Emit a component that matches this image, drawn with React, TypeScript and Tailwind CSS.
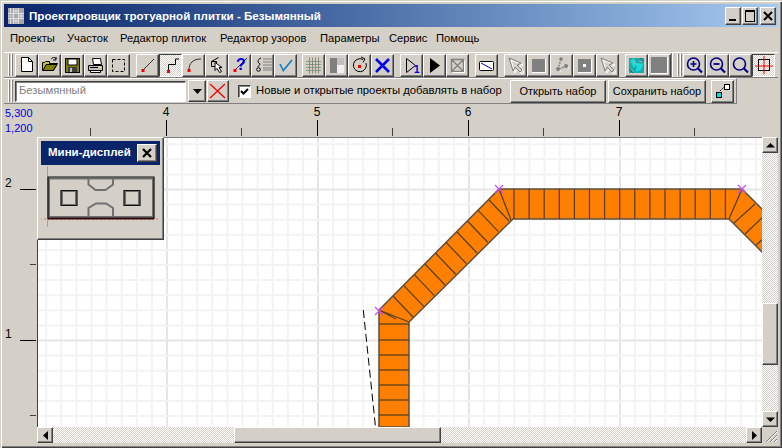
import type { ReactNode } from "react";

const raised =
  "border border-t-white border-l-white border-r-[#404040] border-b-[#404040] shadow-[inset_-1px_-1px_0_#808080] bg-[#d4d0c8]";
const checker =
  "bg-[image:repeating-conic-gradient(#d4d0c8_0_25%,#ffffff_0_50%)] bg-[length:2px_2px]";

function Ico({ children }: { children: ReactNode }) {
  return (
    <svg width="21" height="21" viewBox="0 0 21 21" fill="none" className="block">
      {children}
    </svg>
  );
}

function Btn({ pressed, children }: { pressed?: boolean; children: ReactNode }) {
  return (
    <div
      className={
        pressed
          ? `w-[23px] h-[23px] shrink-0 border border-t-[#404040] border-l-[#404040] border-r-white border-b-white ${checker}`
          : `w-[23px] h-[23px] shrink-0 ${raised}`
      }
    >
      <Ico>{children}</Ico>
    </div>
  );
}

function Grip() {
  return (
    <div className="flex gap-[1px] h-[22px] shrink-0">
      <div className="w-[2px] border-l border-l-white bg-[#808080]" />
      <div className="w-[2px] border-l border-l-white bg-[#808080]" />
    </div>
  );
}

const Dot = ({ x = 5.5, y = 15 }: { x?: number; y?: number }) => (
  <rect x={x - 1} y={y - 1} width="3" height="3" fill="#f00000" />
);

const group1 = [
  <g key="new">
    <path d="M5.5 2.5h7l4 4v10h-11z" fill="#fff" stroke="#000" />
    <path d="M12.5 2.5v4h4" stroke="#000" />
  </g>,
  <g key="open">
    <path d="M3.5 15.500v-8h2l1-1h4v2h8l-4 7z" fill="#c8c050" stroke="#000" />
    <path d="M4 15.500l3-6h11l-4 6z" fill="#808000" stroke="#000" />
    <path d="M12 4c2-2 4-2 5 0M17 2v3h-3" stroke="#000" />
  </g>,
  <g key="save">
    <rect x="3.5" y="3.5" width="14" height="14" fill="#808000" stroke="#000" />
    <rect x="6" y="4" width="9" height="6" fill="#fff" stroke="#000" />
    <rect x="6" y="12" width="9" height="5" fill="#404040" />
    <rect x="8" y="13" width="2" height="4" fill="#c0c0c0" />
  </g>,
  <g key="print">
    <path d="M7.5 3.5h8l1 6h-8z" fill="#fff" stroke="#000" />
    <path d="M3.5 10.500h14v5h-14z" fill="#c0c0c0" stroke="#000" />
    <path d="M5.5 15.500h10v2h-10zM5 12.500h8" stroke="#000" fill="#fff" />
    <rect x="14" y="12" width="2" height="1" fill="#ffff00" />
  </g>,
  <rect key="sel" x="4.5" y="4.5" width="12" height="12" stroke="#000" strokeDasharray="3 2" />,
];

const group2: { pressed?: boolean; el: ReactNode }[] = [
  { el: <g><path d="M6 15L17 4" stroke="#303030" /><Dot /></g> },
  { pressed: true, el: <g><path d="M8.500 16v-6.500h7v-5.500H19" stroke="#000" strokeWidth="1" /><Dot x={8} y={16} /></g> },
  { el: <g><path d="M6 15C6 8 10 4 18 4" stroke="#303030" /><Dot /></g> },
  {
    el: (
      <g>
        <path d="M5.500 6.500l7-4M5.500 6.500h5v5h-5z" stroke="#000" />
        <path d="M9 7.500v8l2-2 2.500 4 2-1-2.500-4h3z" fill="#fff" stroke="#000" />
      </g>
    ),
  },
  {
    el: (
      <g>
        <path d="M6 15L18 3" stroke="#303030" />
        <text x="7" y="15" fill="#0000e0" fontFamily="Liberation Sans" fontWeight="700" fontSize="16">?</text>
        <Dot />
      </g>
    ),
  },
  {
    el: (
      <g>
        <circle cx="6.500" cy="14.500" r="1.800" stroke="#000" />
        <path d="M9 3c-3 1-3 3-3 4 0 1 2 1 2 2s-2 2-2 3" stroke="#000" />
        <path d="M11 4h9M11 7h9M11 10h9M11 13h9M11 15h9" stroke="#808080" />
      </g>
    ),
  },
  { el: <path d="M5 9l3.300 6.500L17 5" stroke="#0a7fd0" strokeWidth="1.6" /> },
];

const group3 = [
  <g key="grid" stroke="#7f9f84">
    <path d="M3 6.500h15M3 9.500h15M3 12.500h15M3 15.500h15" />
    <path d="M6.500 2.500v16M9.500 2.500v16M12.500 2.500v16M15.500 2.500v16" stroke="#908a80" />
  </g>,
  <g key="squares">
    <rect x="4" y="3" width="14" height="15" fill="#808080" />
    <rect x="11" y="3" width="7" height="7" fill="#c0c0c0" />
    <rect x="11" y="10" width="7" height="8" fill="#f0f0f0" />
  </g>,
  <g key="rot">
    <path d="M14 4.500a6.500 6.500 0 1 0 3 3.500" stroke="#000" />
    <path d="M12 2l4 2-2 3.500" stroke="#000" />
    <rect x="9" y="10" width="3" height="3" fill="#f00000" />
  </g>,
  <path key="x" d="M4 4l13 13M17 4L4 17" stroke="#0000f0" strokeWidth="2.6" />,
];

const disabled = "#808080";

const arrowOutline = (
  <g>
    <path d="M5 4l12 5-4 2 5 5-2 2-5-5-2 4z" stroke="#fff" transform="translate(1 1)" />
    <path d="M4 3l12 5-4 2 5 5-2 2-5-5-2 4z" stroke={disabled} />
  </g>
);

function Toolbar1() {
  return (
    <div className="h-[26px] flex items-center border-t border-t-white border-b border-b-[#808080]">
      <div className="flex items-center pl-[4px] w-[668px] shrink-0 h-full border-r border-r-[#808080]">
        <Grip />
        <div className="flex ml-[2px]">
          {group1.map((el, i) => <Btn key={i}>{el}</Btn>)}
        </div>
        <div className="flex ml-[6px]">
          {group2.map((b, i) => <Btn key={i} pressed={b.pressed}>{b.el}</Btn>)}
        </div>
        <div className="flex ml-[5px]">
          {group3.map((el, i) => <Btn key={i}>{el}</Btn>)}
        </div>
        <div className="flex ml-[6px]">
          <Btn>
            <path d="M5.500 3.500v14l9-7z" stroke="#000" />
            <text x="13" y="18" fontFamily="Liberation Sans" fontWeight="700" fontSize="10" fill="#0000e0">1</text>
          </Btn>
          <Btn><path d="M6 3v15l10-7.500z" fill="#000" /></Btn>
          <Btn>
            <path d="M4.500 4.500h12v12h-12zM4.500 4.500l12 12M16.500 4.500l-12 12M4 4l6.500 6.500" stroke={disabled} strokeWidth="1.4" />
            <path d="M5.500 17.500h12M17.500 5.500v12" stroke="#fff" />
          </Btn>
        </div>
        <div className="flex ml-[6px]">
          <Btn>
            <rect x="3.500" y="6.500" width="14" height="9" rx="1" fill="#fff" stroke="#000" />
            <path d="M5 8l11 6" stroke="#0000c0" />
          </Btn>
        </div>
        <div className="flex ml-[6px]">
          <Btn>{arrowOutline}</Btn>
          <Btn>
            <rect x="4" y="4" width="13" height="13" fill={disabled} />
            <path d="M4 17.500h14M17.500 4v14" stroke="#fff" />
          </Btn>
          <Btn>
            <path d="M10 4l-3 10M8 14l8-3" stroke={disabled} strokeDasharray="2 1" strokeWidth="1.4" />
            <circle cx="10" cy="4" r="1.800" fill={disabled} />
            <circle cx="7" cy="14" r="2" fill={disabled} />
            <circle cx="15" cy="11" r="2" fill={disabled} />
            <path d="M9 16h1M17 13h1" stroke="#fff" />
          </Btn>
          <Btn>
            <rect x="4" y="4" width="13" height="13" fill={disabled} />
            <rect x="9" y="9" width="3" height="3" fill="#fff" />
            <path d="M4 17.500h14M17.500 4v14" stroke="#fff" />
          </Btn>
          <Btn>{arrowOutline}</Btn>
        </div>
        <div className="flex ml-[6px]">
          <Btn>
            <rect x="3" y="3" width="15" height="15" fill="#20a8a8" />
            <path d="M4 6l4-2 3 5-3 4zM11 8l6 1-2 6-5 2z" fill="#10e0e0" />
            <path d="M7 3l2 6 3 1M13 6l3 1M5 14l3 3" stroke="#80c0a0" />
            <path d="M3 14l4 4M14 3l4 3" stroke="#107080" />
          </Btn>
          <Btn>
            <rect x="2" y="2" width="17" height="17" fill={disabled} />
            <path d="M2 18.500h17M18.500 2v17" stroke="#fff" />
          </Btn>
        </div>
      </div>
      <div className="flex items-center pl-[4px] h-full border-l border-l-white">
        <Grip />
        <div className="flex ml-[1px]">
          {[
            <path key="a" d="M6.500 9h6M9.500 6v6" stroke="#000080" strokeWidth="1.6" />,
            <path key="b" d="M6.500 9h6" stroke="#000080" strokeWidth="1.8" />,
            null,
          ].map((extra, i) => (
            <Btn key={i}>
              <circle cx="9.500" cy="9" r="6" stroke="#000080" strokeWidth="1.6" />
              <path d="M14 13.500l4 4" stroke="#000080" strokeWidth="2.2" />
              {extra}
            </Btn>
          ))}
          <Btn pressed>
            <rect x="5.500" y="4.500" width="11" height="11" stroke="#000" />
            <path d="M2 11h18M11 1v18" stroke="#f00000" />
          </Btn>
        </div>
      </div>
    </div>
  );
}

function Toolbar2() {
  return (
    <div className="h-[26px] w-[733px] flex items-center pl-[4px] border-t border-t-white border-b border-b-[#808080] border-r border-r-[#808080]">
      <Grip />
      <div className="ml-[2px] w-[171px] h-[21px] flex items-center bg-white pl-[3px] text-[#808080] text-[11.2px] border border-t-[#404040] border-l-[#404040] border-r-white border-b-white shadow-[inset_1px_1px_0_#808080]">
        Безымянный
      </div>
      <div className={`ml-[2px] w-[18px] h-[22px] flex items-center justify-center ${raised}`}>
        <svg width="9" height="5" viewBox="0 0 9 5"><path d="M0 0h9L4.500 5z" fill="#000" /></svg>
      </div>
      <div className={`ml-[1px] w-[22px] h-[22px] ${raised}`}>
        <svg width="20" height="20" viewBox="0 0 20 20"><path d="M2 3l15 14M17 3L2 17" stroke="#f00000" strokeWidth="1.3" /></svg>
      </div>
      <div className="ml-[9px] w-[13px] h-[13px] bg-white border border-t-[#404040] border-l-[#404040] border-r-white border-b-white shadow-[inset_1px_1px_0_#808080]">
        <svg width="11" height="11" viewBox="0 0 11 11"><path d="M2 5l2.500 2.500L9 3" stroke="#000" strokeWidth="2" fill="none" /></svg>
      </div>
      <span className="ml-[5px] w-[254px] shrink-0 whitespace-nowrap text-[11.3px]">Новые и открытые проекты добавлять в набор</span>
      <div className={`w-[96px] h-[23px] shrink-0 flex items-center justify-center whitespace-nowrap text-[11px] ${raised}`}>Открыть набор</div>
      <div className={`ml-[2px] w-[98px] h-[23px] shrink-0 flex items-center justify-center whitespace-nowrap text-[11px] ${raised}`}>Сохранить набор</div>
      <div className={`ml-[5px] w-[23px] h-[23px] shrink-0 ${raised}`}>
        <svg width="21" height="21" viewBox="0 0 21 21" fill="none">
          <rect x="4.500" y="11.500" width="5" height="5" fill="#00e0e0" stroke="#000" />
          <rect x="12.500" y="3.500" width="5" height="5" fill="#fff" stroke="#000" />
          <path d="M8 10l4-4" stroke="#000" strokeDasharray="2 1" />
        </svg>
      </div>
    </div>
  );
}

function Drawing() {
  const vlines: number[] = [];
  for (let k = -30; k < 30; k++) vlines.push(469 + k * 15.1);
  const hlines: number[] = [];
  for (let k = -4; k < 18; k++) hlines.push(189.5 + k * 15.1);

  const edge = "#5c4020";
  const diag: number[] = [];
  for (let k = 0; k < 10; k++) diag.push(k);
  const horiz: number[] = [];
  for (let x = 514; x < 732; x += 15.1) horiz.push(x);
  const vert = [324, 340, 355, 370, 385, 400, 415];

  return (
    <svg width="725" height="290" viewBox="37 137 725 290" className="block" fill="none">
      {vlines.map((x, i) => (
        <line key={i} x1={x} x2={x} y1="137" y2="427" stroke={(i - 30) % 10 === 0 ? "#e6e6e6" : "#f3f3f3"} strokeWidth="2" />
      ))}
      {hlines.map((y, i) => (
        <line key={i} y1={y} y2={y} x1="37" x2="762" stroke={(i - 4) % 10 === 0 ? "#e6e6e6" : "#f3f3f3"} strokeWidth="2" />
      ))}
      <path
        d="M379 310L499 189H742L782 229V272L729 219H513L409 322V427H379Z"
        fill="#ff8000"
        stroke="#5c5040"
        strokeWidth="1.5"
      />
      {diag.map((k) => (
        <line key={k} x1={393 + k * 10.67} y1={296 - k * 10.67} x2={413 + k * 10.67} y2={317 - k * 10.67} stroke={edge} strokeWidth="1.3" />
      ))}
      <path d="M499 189L511 220M379 310L409 322M379 310L396 319" stroke={edge} strokeWidth="1.3" />
      {horiz.map((x) => (
        <line key={x} x1={x} x2={x} y1="189" y2="219" stroke={edge} strokeWidth="1.3" />
      ))}
      {vert.map((y) => (
        <line key={y} y1={y} y2={y} x1="379" x2="409" stroke={edge} strokeWidth="1.3" />
      ))}
      <path d="M742 189L729 219M755 204L734 223M766 214L745 234M778 226L756 245" stroke={edge} strokeWidth="1.3" />
      <path d="M363.300 310L375.500 427" stroke="#000" strokeDasharray="8 4" />
      <path
        d="M495 185l8 8M503 185l-8 8M738 185l8 8M746 185l-8 8M375 307l8 8M383 307l-8 8"
        stroke="#c850f0"
        strokeWidth="1.2"
      />
    </svg>
  );
}

function MiniDisplay() {
  return (
    <div className="absolute left-[33px] top-[33px] w-[127px] h-[103px] p-[3px] bg-[#d4d0c8] border border-t-white border-l-white border-r-[#404040] border-b-[#404040] shadow-[inset_-1px_-1px_0_#808080]">
      <div className="w-[119px] h-[24px] bg-[#0a246a] flex items-center justify-between pl-[7px] pr-[3px] text-white font-bold text-[11.5px]">
        <span className="whitespace-nowrap">Мини-дисплей</span>
        <div className={`w-[20px] h-[18px] shrink-0 flex items-center justify-center ${raised}`}>
          <svg width="10" height="10" viewBox="0 0 10 10"><path d="M1 1l8 8M9 1L1 9" stroke="#000" strokeWidth="2.2" /></svg>
        </div>
      </div>
      <svg width="119" height="71" viewBox="41 165 119 71" fill="none" className="block">
        <path d="M47.500 166v61" stroke="#f08080" />
        <path d="M40 219h121" stroke="#f06060" strokeDasharray="2 2" />
        <path
          d="M49 178.500h104V217H49ZM88.500 177.500v7l7 5.500h10l7.500-5.500v-7M88.500 218v-10l7.500-4.500h10l7 4.500v10"
          stroke="#707070"
          strokeWidth="2"
        />
        <path d="M48 177h106v41.500H48Z" stroke="#101010" strokeWidth="1.2" />
        <path d="M48 218.500h106" stroke="#301010" strokeWidth="2" />
        <rect x="62" y="191" width="14" height="14" stroke="#707070" strokeWidth="2" />
        <path d="M61 190.500h16v15H61Z" stroke="#101010" strokeWidth="1.2" />
        <rect x="125" y="191" width="14" height="14" stroke="#707070" strokeWidth="2" />
        <path d="M124 190.500h16v15h-16Z" stroke="#101010" strokeWidth="1.2" />
      </svg>
    </div>
  );
}

function Arrow({ dir }: { dir: "up" | "down" | "left" | "right" }) {
  const d = { up: "M0 6.500h9L4.500 2z", down: "M0 2.500h9L4.500 7z", left: "M7 0v9L2 4.500z", right: "M2 0v9l5-4.500z" }[dir];
  return (
    <div className={`w-[16px] h-[16px] shrink-0 flex items-center justify-center ${raised}`}>
      <svg width="9" height="9" viewBox="0 0 9 9" className="block"><path d={d} fill="#000" /></svg>
    </div>
  );
}

export default function App() {
  const topTicks = [90, 166, 241, 317, 392, 468, 543, 619, 694];
  const topLabels = [
    { x: 166, t: "4" },
    { x: 317, t: "5" },
    { x: 468, t: "6" },
    { x: 619, t: "7" },
  ];
  return (
    <div
      className="w-[782px] h-[448px] overflow-hidden flex flex-col pt-[4px] pl-[4px] pr-[4px] pb-[5px] bg-[#d4d0c8] text-black text-[12px] leading-none shadow-[inset_1px_1px_0_#d4d0c8,inset_2px_2px_0_#ffffff,inset_-1px_-1px_0_#404040,inset_-2px_-2px_0_#808080]"
      style={{ fontFamily: '"Liberation Sans", sans-serif' }}
    >
      {/* title bar */}
      <div className="h-[23px] shrink-0 flex items-center pl-[4px] pr-[2px] bg-gradient-to-r from-[#0a246a] to-[#a6caf0]">
        <svg width="16" height="16" viewBox="0 0 16 16" className="shrink-0">
          <rect width="16" height="16" fill="#a8a8a8" />
          <path d="M0 5.500h16M0 10.500h16M5.500 0v16M10.500 0v16" stroke="#e0e0e0" />
          <path d="M2.500 0v5M13 5.500v5M2.500 11v5M8 0v5M8 11v5M0 8h5M11 8h5M6 3h4M6 13h4" stroke="#e0e0e0" />
        </svg>
        <span className="ml-[5px] text-white font-bold text-[11.6px] whitespace-nowrap">Проектировщик тротуарной плитки - Безымянный</span>
        <div className="ml-auto flex gap-[1px]">
          <div className={`w-[16px] h-[18px] flex items-end pl-[3px] pb-[3px] ${raised}`}>
            <div className="w-[7px] h-[2px] bg-black" />
          </div>
          <div className={`w-[16px] h-[18px] mr-[1px] p-[2px] ${raised}`}>
            <div className="w-full h-full border border-black border-t-2" />
          </div>
          <div className={`w-[16px] h-[18px] flex items-center justify-center ${raised}`}>
            <svg width="10" height="10" viewBox="0 0 10 10"><path d="M1 1l8 8M9 1L1 9" stroke="#000" strokeWidth="2" /></svg>
          </div>
        </div>
      </div>

      {/* menu */}
      <div className="h-[25px] shrink-0 flex items-center pl-[6px] pb-[1px] text-[11.2px] whitespace-nowrap">
        <span className="w-[57px]">Проекты</span>
        <span className="w-[53px]">Участок</span>
        <span className="w-[100px]">Редактор плиток</span>
        <span className="w-[100px]">Редактор узоров</span>
        <span className="w-[69px]">Параметры</span>
        <span className="w-[47px]">Сервис</span>
        <span>Помощь</span>
      </div>

      <Toolbar1 />
      <Toolbar2 />

      {/* work area */}
      <div className="relative flex-1 flex flex-col">
        <div className="relative h-[33px] shrink-0">
          <div className="absolute left-[1px] top-[2px] text-[#0000e0] text-[11px] leading-[15px]">
            <div>5,300</div>
            <div>1,200</div>
          </div>
          {topLabels.map((l) => (
            <span key={l.t} className="absolute top-[2px] -translate-x-1/2" style={{ left: l.x - 4 }}>{l.t}</span>
          ))}
          {topTicks.map((x, i) => (
            <div
              key={x}
              className={i % 2 === 1 ? "absolute top-[16px] h-[16px] w-[1px] bg-black" : "absolute top-[24px] h-[8px] w-[1px] bg-[#404040]"}
              style={{ left: x - 4 }}
            />
          ))}
        </div>
        <div className="flex h-[290px] shrink-0">
          <div className="relative w-[33px] shrink-0">
            <span className="absolute left-[1px] top-[40px]">2</span>
            <span className="absolute left-[1px] top-[191px]">1</span>
            <div className="absolute left-[16px] top-[52px] w-[16px] h-[1px] bg-black" />
            <div className="absolute left-[26px] top-[127px] w-[6px] h-[1px] bg-[#404040]" />
            <div className="absolute left-[16px] top-[203px] w-[16px] h-[1px] bg-black" />
            <div className="absolute left-[26px] top-[278px] w-[6px] h-[1px] bg-[#404040]" />
          </div>
          <div className="relative w-[725px] bg-white overflow-hidden">
            <Drawing />
            <div className="absolute inset-0 border-t border-l border-t-[#808080] border-l-[#404040]" />
          </div>
          <div className={`w-[16px] shrink-0 flex flex-col ${checker}`}>
            <Arrow dir="up" />
            <div className="h-[150px]" />
            <div className={`w-[16px] h-[62px] ${raised}`} />
            <div className="flex-1" />
            <Arrow dir="down" />
          </div>
        </div>
        <div className="flex h-[16px] shrink-0 pl-[33px]">
          <div className={`w-[725px] flex ${checker}`}>
            <Arrow dir="left" />
            <div className="w-[181px]" />
            <div className={`w-[207px] h-[16px] ${raised}`} />
            <div className="flex-1" />
            <Arrow dir="right" />
          </div>
          <div className="relative w-[16px] h-[16px]">
            <svg width="16" height="16" viewBox="0 0 16 16">
              <path d="M15 4L4 15M15 8l-7 7M15 12l-3 3" stroke="#808080" />
              <path d="M15 5L5 15M15 9l-6 6M15 13l-2 2" stroke="#fff" />
            </svg>
          </div>
        </div>
        <MiniDisplay />
      </div>
    </div>
  );
}
